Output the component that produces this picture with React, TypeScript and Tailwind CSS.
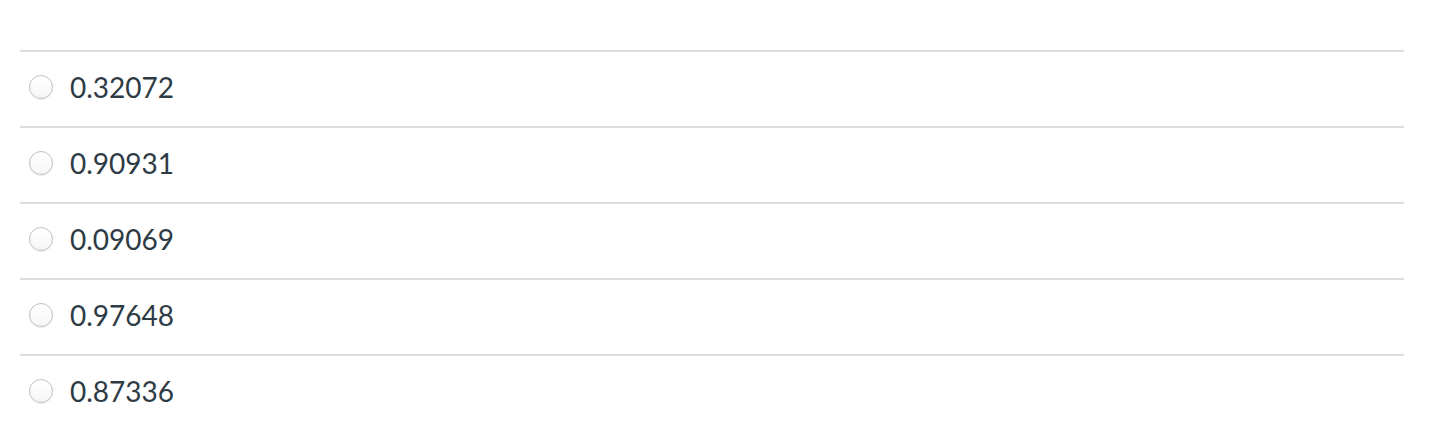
import React from "react";

const answers = ["0.32072", "0.90931", "0.09069", "0.97648", "0.87336"];

export default function App() {
  return (
    <div className="w-[1434px] h-[444px] bg-white pt-[50px] px-5" style={{ fontFamily: "Lato, 'Open Sans', sans-serif" }}>
      <div className="w-[1384px]">
        {answers.map((a) => (
          <div key={a} className="border-t-2 border-[#dcdcdc] h-[76px] flex items-center pb-[5px]">
            <span className="ml-[9px] w-[24px] h-[24px] rounded-full border border-[#c0c0c0] bg-gradient-to-b from-white to-[#f6f6f6] shadow-[0_1px_1px_rgba(0,0,0,0.08)]" />
            <span className="ml-[17px] text-[28px] text-[#2d3b45] leading-none">{a}</span>
          </div>
        ))}
      </div>
    </div>
  );
}
